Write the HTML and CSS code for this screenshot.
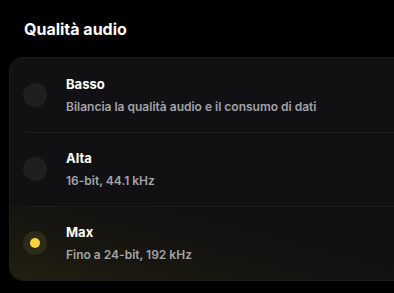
FILE: index.html
```
<!DOCTYPE html>
<html lang="it">
<head>
    <meta charset="UTF-8">
    <title>Qualità audio</title>
    <link rel="stylesheet" href="styles.css">
</head>
<body>

<div class="settings">
    <h2 class="settings-title">Qualità audio</h2>
    <div class="option-list">
        <div class="option">
            <div class="radio"></div>
            <div class="option-text">
                <div class="option-name">Basso</div>
                <div class="option-desc">Bilancia la qualità audio e il consumo di dati</div>
            </div>
        </div>
        <div class="option">
            <div class="radio"></div>
            <div class="option-text">
                <div class="option-name">Alta</div>
                <div class="option-desc">16-bit, 44.1 kHz</div>
            </div>
        </div>
        <div class="option selected">
            <div class="radio"><div class="radio-dot"></div></div>
            <div class="option-text">
                <div class="option-name">Max</div>
                <div class="option-desc">Fino a 24-bit, 192 kHz</div>
            </div>
        </div>
    </div>
</div>

</body>
</html>
```
FILE: styles.css
```
body {
    margin: 0;
    background: #000;
    font-family: Inter, "Noto Sans", sans-serif;
    overflow: hidden;
}

.settings {
    padding: 18px 0 0 9px;
}

.settings-title {
    margin: 0 0 17px 15px;
    font-size: 16px;
    font-weight: 700;
    line-height: 22px;
    color: #fff;
}

.option-list {
    width: 400px;
    background: #111113;
    border: 1px solid #1b1b1e;
    border-radius: 14px;
    overflow: hidden;
}

.option {
    display: flex;
    align-items: center;
    gap: 19px;
    height: 74px;
    padding-left: 13px;
    position: relative;
}

.option + .option::before {
    content: "";
    position: absolute;
    top: 0;
    left: 16px;
    right: 0;
    border-top: 1px solid #1d1d20;
}

.option.selected {
    background: linear-gradient(15deg, #231f10 0%, #17160f 30%, #111113 65%);
}

.radio {
    width: 24px;
    height: 24px;
    border-radius: 50%;
    background: #1f1f22;
    display: flex;
    align-items: center;
    justify-content: center;
    flex-shrink: 0;
}

.selected .radio {
    background: #2d2a17;
}

.radio-dot {
    width: 10px;
    height: 10px;
    border-radius: 50%;
    background: #fcd535;
}

.option-text {
    display: flex;
    flex-direction: column;
    gap: 6px;
}

.option-name {
    font-size: 13px;
    font-weight: 700;
    color: #fff;
    line-height: 17px;
}

.option-desc {
    font-size: 12px;
    font-weight: 600;
    color: #a3a3a8;
    line-height: 15px;
}
```
